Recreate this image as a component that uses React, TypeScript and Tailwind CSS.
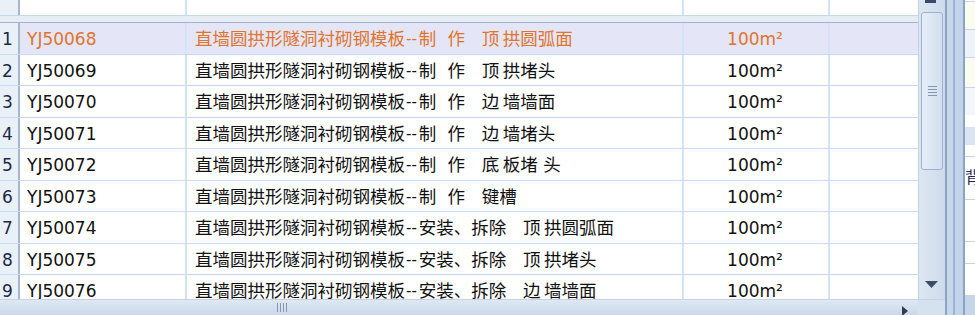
const T = '\u2009';
const rows = [
  { no: 1, code: 'YJ50068', name: `直墙圆拱形隧洞衬砌钢模板--制  作   顶${T}拱圆弧面` },
  { no: 2, code: 'YJ50069', name: `直墙圆拱形隧洞衬砌钢模板--制  作   顶${T}拱堵头` },
  { no: 3, code: 'YJ50070', name: `直墙圆拱形隧洞衬砌钢模板--制  作   边${T}墙墙面` },
  { no: 4, code: 'YJ50071', name: `直墙圆拱形隧洞衬砌钢模板--制  作   边${T}墙堵头` },
  { no: 5, code: 'YJ50072', name: `直墙圆拱形隧洞衬砌钢模板--制  作   底${T}板堵 头` },
  { no: 6, code: 'YJ50073', name: `直墙圆拱形隧洞衬砌钢模板--制  作   键槽` },
  { no: 7, code: 'YJ50074', name: `直墙圆拱形隧洞衬砌钢模板--安装、拆除   顶${T}拱圆弧面` },
  { no: 8, code: 'YJ50075', name: `直墙圆拱形隧洞衬砌钢模板--安装、拆除   顶${T}拱堵头` },
  { no: 9, code: 'YJ50076', name: `直墙圆拱形隧洞衬砌钢模板--安装、拆除   边${T}墙墙面` },
];

const font = { fontFamily: '"DejaVu Sans", "Noto Sans CJK SC", sans-serif' };

function Name({ name }: { name: string }) {
  const [head, tail] = name.split('--');
  return (
    <>
      {head}
      <span className="text-[15px] ml-[1px] mr-[2px]">--</span>
      {tail}
    </>
  );
}

function Row({ no, code, name, selected }: { no: number; code: string; name: string; selected?: boolean }) {
  const text = selected ? 'text-[#e0742c]' : 'text-[#111]';
  const bg = selected ? 'bg-[#e5e5f8]' : 'bg-white';
  return (
    <div className="flex h-[31.5px] shrink-0 border-b border-[#c9dbf2]">
      <div className="w-[20px] shrink-0 flex items-center pt-[3px] pl-[2px] bg-[#eaf0f8] border-r-2 border-[#a7b7cc] text-[#1a2a48]">
        {no}
      </div>
      <div className={`w-[167px] shrink-0 flex items-center pt-[3px] pl-[7px] border-r-2 border-[#d3e2f4] ${bg} ${text}`}>
        {code}
      </div>
      <div className={`w-[497px] shrink-0 flex items-center pt-[3px] pl-[8px] border-r-2 border-[#d3e2f4] whitespace-pre text-[17.5px] ${bg} ${text}`}>
        <Name name={name} />
      </div>
      <div className={`w-[146px] shrink-0 flex items-center justify-center pt-[3px] pr-[2px] border-r-2 border-[#d3e2f4] ${bg} ${text}`}>
        100m²
      </div>
      <div className={`flex-1 ${bg}`} />
    </div>
  );
}

export default function App() {
  return (
    <div className="flex w-[975px] h-[315px] overflow-hidden bg-white text-[17px] leading-none" style={font}>
      <div className="flex flex-col w-[945px] shrink-0">
        <div className="flex flex-1 min-h-0">
          {/* grid */}
          <div className="flex flex-col w-[918px] shrink-0 overflow-hidden">
            <div className="flex h-[16px] shrink-0 border-b border-[#c6d8ee]">
              <div className="w-[20px] bg-[#eaf0f8] border-r-2 border-[#a7b7cc]" />
              <div className="w-[167px] border-r-2 border-[#d3e2f4]" />
              <div className="w-[497px] border-r-2 border-[#d3e2f4]" />
              <div className="w-[146px] border-r-2 border-[#d3e2f4]" />
              <div className="flex-1" />
            </div>
            <div className="h-[7px] shrink-0 bg-[#e7edf5] border-b border-[#a3b4ca]" />
            {rows.map((r, i) => (
              <Row key={r.no} {...r} selected={i === 0} />
            ))}
          </div>
          {/* vertical scrollbar */}
          <div className="w-[27px] shrink-0 flex flex-col bg-gradient-to-r from-[#dde7f3] to-[#cfdbeb] border-l border-[#c3d2e5]">
            <div className="h-[12px] flex justify-center items-start">
              <div className="w-[11px] h-[3px] bg-[#3a4a66] ml-[-4px]" />
            </div>
            <div className="mx-[2px] h-[158px] rounded-[3px] border border-[#9db2ce] bg-gradient-to-r from-[#e6eef8] to-[#d3dfee] flex items-center justify-center">
              <div className="flex flex-col gap-[2px]">
                <div className="w-[9px] h-px bg-[#8396b2]" />
                <div className="w-[9px] h-px bg-[#8396b2]" />
                <div className="w-[9px] h-px bg-[#8396b2]" />
                <div className="w-[9px] h-px bg-[#8396b2]" />
              </div>
            </div>
            <div className="flex-1" />
            <div className="h-[24px] flex justify-center pt-[6px]">
              <svg width="13" height="8" viewBox="0 0 13 8" className="ml-[-2px]">
                <polygon points="0,0 13,0 6.5,7" fill="#3d4d68" />
              </svg>
            </div>
          </div>
        </div>
        {/* horizontal scrollbar */}
        <div className="h-[16px] shrink-0 flex bg-gradient-to-b from-[#dfe8f4] to-[#cbd8ea] border-t border-[#c3d2e5]">
          <div className="w-[918px] flex items-center">
            <div className="ml-[277px] flex gap-[2px]">
              <div className="w-px h-[9px] bg-[#8396b2]" />
              <div className="w-px h-[9px] bg-[#8396b2]" />
              <div className="w-px h-[9px] bg-[#8396b2]" />
              <div className="w-px h-[9px] bg-[#8396b2]" />
            </div>
            <div className="flex-1" />
            <svg width="6" height="10" viewBox="0 0 6 10" className="mr-[10px] mt-[6px]">
              <polygon points="0,0 6,5 0,10" fill="#2f3d57" />
            </svg>
          </div>
          <div className="flex-1 bg-[#d6e1ef]" />
        </div>
      </div>
      {/* splitter */}
      <div className="flex w-[20px] shrink-0">
        <div className="w-[2px] bg-[#8aa4c6]" />
        <div className="w-[6px] bg-[#c7d7eb]" />
        <div className="w-[2px] bg-[#9cb2d1]" />
        <div className="w-[8px] bg-[#c3d4ea]" />
        <div className="w-[2px] bg-[#8aa4c6]" />
      </div>
      {/* right panel */}
      <div className="flex-1 flex flex-col bg-white overflow-hidden">
        <div className="h-[2px] border-b border-[#c6d7ed]" />
        <div className="h-[28px] bg-[#fbfbef] border-b border-[#c6d7ed]" />
        <div className="h-[28px] bg-[#eef3fa] border-b border-[#c6d7ed]" />
        <div className="h-[30px] bg-[#fbfbef] border-b border-[#c6d7ed]" />
        <div className="h-[27px] bg-[#f3f6fb]" />
        <div className="h-[12px] bg-white" />
        <div className="h-[18px] bg-[#dbe4f1]" />
        <div className="h-[12px] bg-white border-b border-[#c6d7ed]" />
        <div className="h-[43px] bg-white flex items-center text-[#1a2a58] text-[16px] border-b border-[#c6d7ed]">背</div>
        <div className="h-[42px] bg-white border-b border-[#c6d7ed]" />
        <div className="h-[22px] bg-white border-b border-[#c6d7ed]" />
        <div className="h-[31px] bg-white" />
        <div className="flex-1 bg-[#c6d6ea]" />
      </div>
    </div>
  );
}
